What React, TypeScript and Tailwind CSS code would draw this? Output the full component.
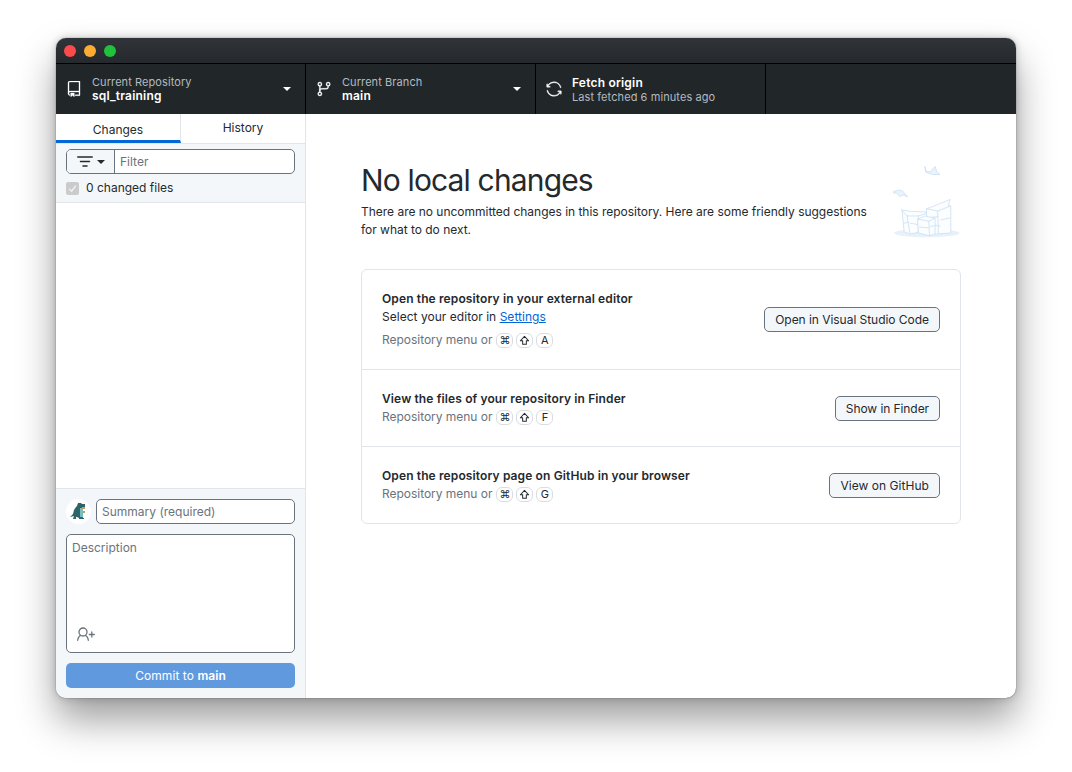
import { GoRepo, GoGitBranch, GoSync } from 'react-icons/go'

function Caret({ className }: { className: string }) {
  return (
    <svg viewBox="0 0 8 4" className={className} fill="currentColor">
      <path d="M0 0h8L4 4z" />
    </svg>
  )
}

function ToolbarItem({ icon, label, value, width, caret, bright }: { icon: React.ReactNode; label: string; value: string; width: string; caret?: boolean; bright?: boolean }) {
  return (
    <div className={`flex items-center border-r border-black pl-[10px] pr-[14px] ${width}`}>
      <div className="w-[26px] text-white flex items-center">{icon}</div>
      <div className={`flex-1 flex leading-[14px] ${bright ? 'flex-col-reverse pt-[1px]' : 'flex-col'}`}>
        <span className="text-[11px] text-[#b4bac0] tracking-[0.08px]">{label}</span>
        <span className="text-[12px] font-semibold text-white tracking-[0.2px]">{value}</span>
      </div>
      {caret && <Caret className="w-[8px] h-[4px] text-white" />}
    </div>
  )
}

function Kbd({ children }: { children: React.ReactNode }) {
  return (
    <span className="w-[17px] h-[15px] flex items-center justify-center rounded-[6px] border border-[#d9dde1] text-[11px] text-[#24292e] leading-none">
      {children}
    </span>
  )
}

function Shortcut({ letter, className }: { letter: string; className: string }) {
  return (
    <div className={`flex items-center text-[#6a737d] text-[12px] h-[16px] ${className}`}>
      <span className="mr-[4px] tracking-[-0.03px]">Repository menu or</span>
      <div className="flex gap-[3px]">
        <Kbd>⌘</Kbd>
        <Kbd>
          <svg viewBox="0 0 12 12" className="w-[11px] h-[11px]" fill="none" stroke="currentColor" strokeWidth="1.1">
            <path d="M6 1.5 10.5 6.3H8V10H4V6.3H1.5z" strokeLinejoin="round" />
          </svg>
        </Kbd>
        <Kbd>{letter}</Kbd>
      </div>
    </div>
  )
}

function ActionButton({ label, className }: { label: string; className: string }) {
  return (
    <button className={`h-[25px] px-[10px] rounded-[5px] border border-[#6a737d] bg-[#f4f7fa] text-[12px] text-[#24292e] whitespace-nowrap ${className}`}>
      {label}
    </button>
  )
}

function Illustration() {
  return (
    <svg viewBox="70 45 205 222" className="w-[68px] h-[73px]" fill="none" stroke="#c9dff4" strokeWidth="2.4" strokeLinejoin="round" strokeLinecap="round">
      <ellipse cx="172" cy="252" rx="100" ry="13" fill="#e8f1fa" stroke="none" />
      <path d="M166 50l2 16 16-2 13-15 5 16 10 9-22 0-18-6z" fill="#eaf3fb" />
      <path d="M68 128c10-7 22-8 30-4l16 18-14-6-10 5-8-9z" fill="#eaf3fb" />
      <path d="M172 178l33-13 38-15-6 20 8 0 0 82-47 3-24-4z" fill="#fbfdff" />
      <path d="M172 178l33 7 38-15M205 185l2 66M178 205l27-3M198 228l14 3M215 212l26-6" />
      <path d="M95 182l30 4 45 2-2 6-22 6 0 50-26 5-17-7-6-63z" fill="#fbfdff" />
      <path d="M97 184l15 16 34 0M112 200l8 52M103 222l13-3M122 222l22 4" />
      <path d="M145 210l20-10 32 7 0 48-17 5-33-8z" fill="#fbfdff" />
      <path d="M145 210l33 6 19-9M178 216l2 44M150 234l26 2M182 232l13-2" />
    </svg>
  )
}

function Dino() {
  return (
    <svg viewBox="0 0 17 17" className="w-[17px] h-[17px]">
      <path d="M8 0h3l1 1h3v3l-2 1h-1v5l1 5h1v1H9v-1l-2-1H6v2H3l1-3-4 1 3-3 1-4 2-3 1-1z" fill="#2c6468" />
      <path d="M10 5h3v9h-3z" fill="#79bcc2" />
      <path d="M12 4h3v2h-3zM13 8h2v2h-2z" fill="#c99a5b" />
    </svg>
  )
}

export default function App() {
  return (
    <div className="w-[1072px] h-[772px] overflow-hidden bg-white pt-[38px] pl-[56px] font-['Inter',sans-serif] antialiased">
      <div className="w-[960px] h-[660px] rounded-[10px] overflow-hidden flex flex-col bg-white shadow-[0_22px_38px_rgba(0,0,0,0.38),0_0_8px_rgba(0,0,0,0.22),0_0_1px_rgba(0,0,0,0.7)]">
        <div className="h-[26px] shrink-0 bg-gradient-to-b from-[#303337] to-[#25282c] border-b border-black flex items-center gap-[8px] pl-[8px]">
          <span className="w-[12px] h-[12px] rounded-full bg-[#fc4b4a]" />
          <span className="w-[12px] h-[12px] rounded-full bg-[#fdac31]" />
          <span className="w-[12px] h-[12px] rounded-full bg-[#1fc23a]" />
        </div>

        <div className="h-[50px] shrink-0 bg-[#212629] flex">
          <ToolbarItem icon={<GoRepo size={16} stroke="currentColor" strokeWidth={0.5} />} label="Current Repository" value="sql_training" width="w-[250px]" caret />
          <ToolbarItem icon={<GoGitBranch size={16} stroke="currentColor" strokeWidth={0.5} />} label="Current Branch" value="main" width="w-[230px]" caret />
          <ToolbarItem icon={<GoSync size={16} stroke="currentColor" strokeWidth={0.5} />} label="Last fetched 6 minutes ago" value="Fetch origin" width="w-[230px]" bright />
        </div>

        <div className="flex-1 flex min-h-0">
          <div className="w-[250px] shrink-0 border-r border-[#e1e4e8] flex flex-col">
            <div className="h-[30px] flex border-b border-[#e1e4e8] text-[12px] text-[#24292e]">
              <div className="w-[125px] border-r border-[#e1e4e8] border-b-[3px] border-b-[#0366d6] flex items-center justify-center pt-[5px]">Changes</div>
              <div className="flex-1 flex items-center justify-center pb-[1px]">History</div>
            </div>
            <div className="h-[59px] bg-[#f4f7fa] border-b border-[#e1e4e8] px-[10px] pt-[5px]">
              <div className="h-[25px] flex rounded-[5px] border border-[#6a737d] bg-white overflow-hidden">
                <div className="w-[48px] bg-[#f4f7fa] border-r border-[#6a737d] flex items-center pl-[10px] gap-[4px] text-[#24292e]">
                  <svg viewBox="0 0 16 11" className="w-[16px] h-[11px] shrink-0" fill="none" stroke="currentColor" strokeWidth="1.5" strokeLinecap="round">
                    <path d="M.8 1h14.4M3.5 5.5h9M6 10h4" />
                  </svg>
                  <Caret className="w-[8px] h-[4px] shrink-0" />
                </div>
                <span className="pl-[5px] text-[12px] text-[#6a737d] leading-[23px]">Filter</span>
              </div>
              <div className="flex items-center mt-[6px] h-[16px]">
                <span className="w-[13px] h-[13px] rounded-[2px] bg-[#c9cbcd] flex items-center justify-center">
                  <svg viewBox="0 0 12 12" className="w-[11px] h-[11px]" fill="none" stroke="#eef0f2" strokeWidth="1.6">
                    <path d="M2.5 6.5 5 9l4.5-6" />
                  </svg>
                </span>
                <span className="ml-[7px] text-[12px] text-[#24292e]">0 changed files</span>
              </div>
            </div>
            <div className="flex-1" />
            <div className="h-[210px] bg-[#f4f7fa] border-t border-[#e1e4e8] px-[10px] pt-[10px]">
              <div className="flex items-center">
                <div className="w-[25px] h-[25px] rounded-full bg-white flex items-center justify-center">
                  <Dino />
                </div>
                <div className="ml-[5px] flex-1 h-[25px] rounded-[5px] border border-[#6a737d] bg-white pl-[5px] text-[12px] text-[#6a737d] leading-[23px]">Summary (required)</div>
              </div>
              <div className="mt-[10px] h-[119px] rounded-[5px] border border-[#6a737d] bg-white flex flex-col justify-between px-[5px] pt-[5px] pb-[11px]">
                <span className="text-[12px] text-[#6a737d] leading-[16px]">Description</span>
                <svg viewBox="0 0 18 14" className="ml-[5px] w-[18px] h-[14px] text-[#6a737d]" fill="none" stroke="currentColor" strokeWidth="1.3" strokeLinecap="round">
                  <circle cx="6" cy="5" r="4" />
                  <path d="M.7 13.3c.3-2.8 2-4.5 3.2-4.9M11.3 13.3c-.3-2.8-2-4.5-3.2-4.9M12.3 7.5h5M14.8 5v5" />
                </svg>
              </div>
              <button className="mt-[10px] w-full h-[25px] rounded-[5px] bg-[#6199de] text-white text-[12px] tracking-[0.06px]">
                Commit to <span className="font-semibold">main</span>
              </button>
            </div>
          </div>

          <div className="flex-1 px-[55px] pt-[46px]">
            <div className="flex justify-between items-start h-[109px]">
              <div>
                <h1 className="text-[30px] leading-[40px] font-normal text-[#24292e] tracking-[-0.85px]">No local changes</h1>
                <p className="mt-[3px] w-[520px] text-[12px] leading-[18px] text-[#24292e] tracking-[-0.02px]">
                  There are no uncommitted changes in this repository. Here are some friendly suggestions for what to do next.
                </p>
              </div>
              <div className="mt-[5px]"><Illustration /></div>
            </div>
            <div className="w-[600px] rounded-[6px] border border-[#e1e4e8] flex flex-col">
              <div className="h-[100px] border-b border-[#e1e4e8] flex items-start justify-between px-[20px]">
                <div className="pt-[20px]">
                  <div className="text-[12px] font-semibold text-[#24292e] leading-[18px] tracking-[0.12px]">Open the repository in your external editor</div>
                  <div className="text-[12px] text-[#24292e] leading-[18px] tracking-[0.03px]">
                    Select your editor in <a className="text-[#0366d6] underline">Settings</a>
                  </div>
                  <Shortcut letter="A" className="mt-[6px]" />
                </div>
                <ActionButton label="Open in Visual Studio Code" className="mt-[37px] tracking-[-0.04px]" />
              </div>
              <div className="h-[77px] border-b border-[#e1e4e8] flex items-start justify-between px-[20px]">
                <div className="pt-[20px]">
                  <div className="text-[12px] font-semibold text-[#24292e] leading-[18px] tracking-[0.12px]">View the files of your repository in Finder</div>
                  <Shortcut letter="F" className="mt-[1px]" />
                </div>
                <ActionButton label="Show in Finder" className="mt-[26px] tracking-[-0.08px]" />
              </div>
              <div className="h-[76px] flex items-start justify-between px-[20px]">
                <div className="pt-[20px]">
                  <div className="text-[12px] font-semibold text-[#24292e] leading-[18px] tracking-[0.12px]">Open the repository page on GitHub in your browser</div>
                  <Shortcut letter="G" className="mt-[1px]" />
                </div>
                <ActionButton label="View on GitHub" className="mt-[26px] tracking-[0.04px]" />
              </div>
            </div>
          </div>
        </div>
      </div>
    </div>
  )
}
